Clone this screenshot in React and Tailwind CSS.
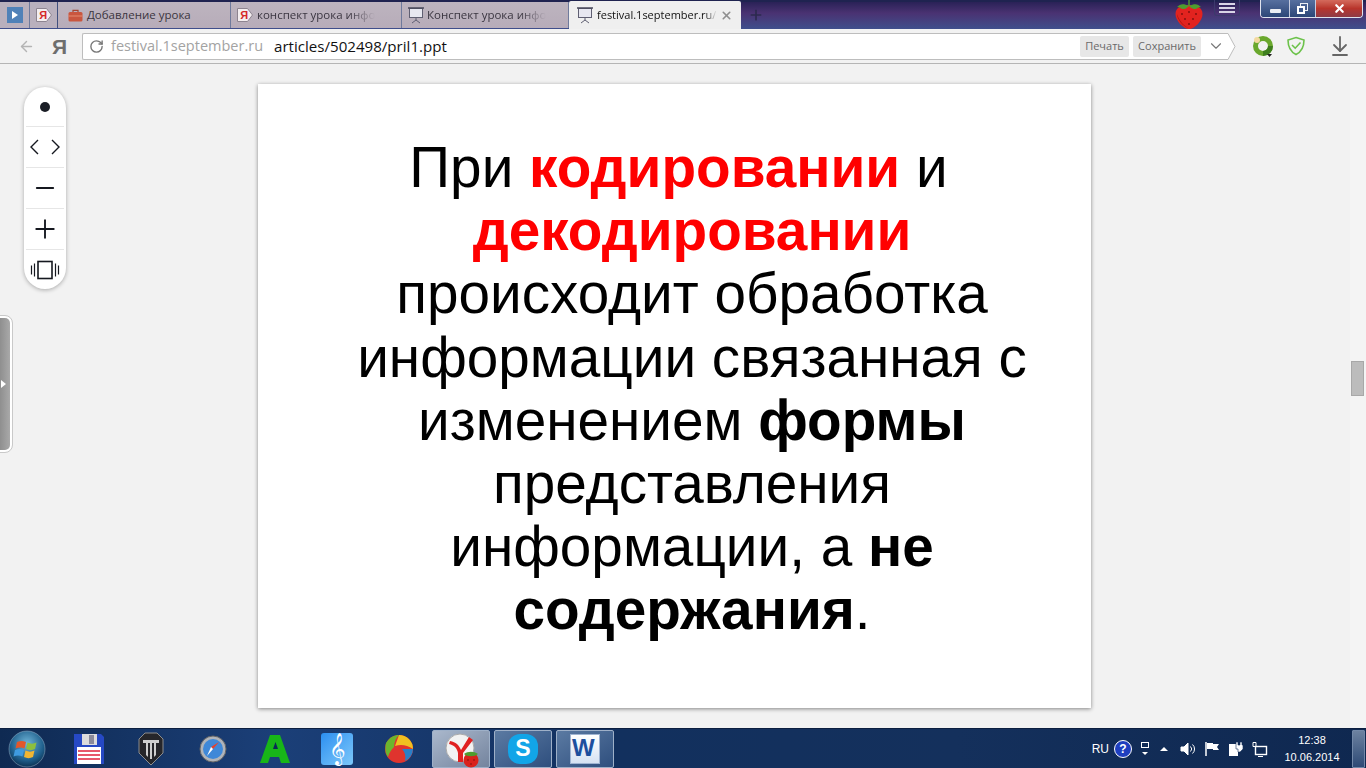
import { ArrowDownToLine, ArrowLeft, ChevronDown, Minus, Plus, RotateCw, X } from "lucide-react";

const UI_FONT = "font-['Open_Sans','Noto_Sans',sans-serif]";

const YaBadge = () => (
  <svg width="18" height="16" viewBox="0 0 18 16" className="shrink-0">
    <path d="M1.5 1.5h10l5 6.5-5 6.5h-10z" fill="#f4eef0" stroke="#8d8490" />
    <text x="4.2" y="12.2" fontSize="11" fontWeight="700" fill="#d42a2a" fontFamily="Liberation Sans, sans-serif">Я</text>
  </svg>
);

const BoardIcon = () => (
  <svg width="18" height="18" viewBox="0 0 18 18" className="shrink-0" fill="none">
    <rect x="2.5" y="2.5" width="13" height="9" fill="#e7e7f0" stroke="#5f5f72" />
    <path d="M1 2h16" stroke="#4a4a5c" strokeWidth="1.5" />
    <path d="M9 12v2M9 14l-4 3M9 14l4 3" stroke="#5f5f72" />
  </svg>
);

const CaseIcon = () => (
  <svg width="15" height="13" viewBox="0 0 15 13" className="shrink-0">
    <rect x="0.5" y="3" width="14" height="9.5" rx="1.5" fill="#c9563f" />
    <path d="M5 3V1.3h5V3" fill="none" stroke="#a84430" strokeWidth="1.2" />
    <rect x="0.5" y="6.5" width="14" height="1" fill="#e58b72" />
  </svg>
);

const Tab = ({ icon, label, width, gap = "gap-[5px]", padding = "pl-[8px]", fade }) => (
  <div className={`${width} ${padding} ${gap} h-[26px] flex items-center bg-gradient-to-b from-[#bdb4bf] to-[#b7acb9] border-r border-[#6f7a9c] overflow-hidden`}>
    {icon}
    <span className={`text-[11.500px] text-[#3a3540] whitespace-nowrap ${fade ? "[mask-image:linear-gradient(to_right,black_78%,transparent)]" : ""}`}>
      {label}
    </span>
  </div>
);

const Strawberry = () => (
  <svg width="30" height="30" viewBox="0 0 30 30">
    <path d="M15 5C8 5 1.5 7 1.5 14c0 7 8 15 13.5 15s13.5-8 13.5-15C28.500 7 22 5 15 5z" fill="#e2231f" />
    <path d="M3 14c0 5 6 13 12 14C9 26 5 20 3 14z" fill="#a81410" />
    <path d="M15 6C9 3 6 4 3 7c3 0 4 2 6 2s3 0 6-3zm0 0c6-3 9-2 12 1-3 0-4 2-6 2s-3 0-6-3z" fill="#4f9d2f" />
    <path d="M15 0v6" stroke="#4f9d2f" strokeWidth="1.5" />
    <g fill="#7a100c">
      <circle cx="8" cy="14" r=".9" /><circle cx="15" cy="12" r=".9" /><circle cx="22" cy="14" r=".9" />
      <circle cx="11" cy="19" r=".9" /><circle cx="19" cy="19" r=".9" /><circle cx="15" cy="24" r=".9" />
    </g>
  </svg>
);

const TabStrip = () => (
  <div className="h-[29px] shrink-0 flex items-end relative bg-[linear-gradient(to_bottom,#241f52_0%,#4a3272_45%,#3f4f8c_100%)]">
    <div className="absolute top-0 left-0 right-0 h-[2px] bg-[#1f2350]" />
    <div className="relative flex items-end pb-px w-full">
      <div className="w-[30px] h-[26px] flex items-center justify-center bg-[#b9b0bd] border-r border-[#6f7a9c]">
        <div className="w-4 h-4 bg-[#4f81b8] flex items-center justify-center">
          <div className="border-l-[6px] border-l-white border-y-[4px] border-y-transparent" />
        </div>
      </div>
      <div className="w-[28px] h-[26px] flex items-center justify-center bg-[#b9b0bd] border-r border-[#41507e]">
        <YaBadge />
      </div>
      <Tab width="w-[173px]" icon={<CaseIcon />} label="Добавление урока" gap="gap-[4px]" padding="pl-[10px]" />
      <Tab width="w-[171px]" icon={<YaBadge />} label="конспект урока инфо" padding="pl-[5px]" gap="gap-[3px]" fade />
      <Tab width="w-[167px]" icon={<BoardIcon />} label="Конспект урока инфо" padding="pl-[5px]" gap="gap-[2px]" fade />
      <div className="w-[172px] h-[28px] -mb-px pl-[7px] pr-2 flex items-center gap-[3px] bg-[#efefef] rounded-t-[2px]">
        <BoardIcon />
        <span className="text-[11px] text-[#111] whitespace-nowrap flex-1 [mask-image:linear-gradient(to_right,black_90%,transparent)]">
          festival.1september.ru/
        </span>
        <X size={13} strokeWidth={3} className="text-[#8f8f8f] shrink-0" />
      </div>
      <div className="ml-[7px] h-[26px] flex items-center">
        <Plus size={16} strokeWidth={2.5} className="text-[#2c2a4f]" />
      </div>
      <div className="ml-auto h-[28px] flex items-start">
        <Strawberry />
        <div className="ml-[10px] w-[26px] h-[16px] flex flex-col items-center justify-center gap-[2px] border border-t-0 border-[#3c3a6c] rounded-b-[3px]">
          <div className="w-4 h-[2px] bg-[#d7d4e6]" />
          <div className="w-4 h-[2px] bg-[#d7d4e6]" />
          <div className="w-4 h-[2px] bg-[#d7d4e6]" />
        </div>
        <div className="ml-[20px] mr-[3px] w-[103px] h-[18px] flex border border-t-0 border-[#dfe3ee] rounded-b-[4px] overflow-hidden">
          <div className="w-[29px] flex items-center justify-center bg-gradient-to-b from-[#57709f] to-[#2c4677] border-r border-[#c6cde0]">
            <div className="w-[11px] h-[4px] mt-1 bg-white/90 rounded-[1px]" />
          </div>
          <div className="w-[26px] flex items-center justify-center bg-gradient-to-b from-[#57709f] to-[#2c4677] border-r border-[#c6cde0]">
            <div className="relative w-[11px] h-[11px]">
              <div className="absolute top-0 right-0 w-[8px] h-[8px] border border-white/90" />
              <div className="absolute bottom-0 left-0 w-[8px] h-[8px] border-2 border-white bg-[#3f5a8c]" />
            </div>
          </div>
          <div className="flex-1 flex items-center justify-center bg-gradient-to-b from-[#d46a5c] via-[#b8342b] to-[#8e3a46]">
            <X size={13} strokeWidth={4} className="text-white" />
          </div>
        </div>
      </div>
    </div>
  </div>
);

const Toolbar = () => (
  <div className={`h-[35px] shrink-0 flex items-center bg-[#f2f2f2] border-b border-[#b5b5b5] ${UI_FONT}`}>
    <ArrowLeft size={17} strokeWidth={2} className="ml-[18px] text-[#b4b4b4]" />
    <span className="ml-[17px] w-[29px] text-[21px] leading-none font-bold text-[#6e6e6e] font-['Liberation_Sans',sans-serif]">Я</span>
    <div className="relative h-[27px] w-[1146px] ml-[1px] flex items-center bg-white border border-r-0 border-[#bdbdbd] rounded-l-[2px]">
      <RotateCw size={15} strokeWidth={2.2} className="ml-[6px] text-[#777]" />
      <span className="ml-[7px] text-[14.500px] text-[#a3a3a3]">festival.1september.ru</span>
      <span className="ml-[11px] text-[15.100px] text-[#111]">articles/502498/pril1.ppt</span>
      <div className="ml-auto flex items-center h-full">
        <span className="h-[21px] w-[49px] flex items-center justify-center bg-[#e7e7e7] rounded-[2px] text-[11px] text-[#6a6a6a]">Печать</span>
        <span className="ml-[4px] h-[21px] w-[68px] flex items-center justify-center bg-[#e7e7e7] rounded-[2px] text-[11px] text-[#6a6a6a]">Сохранить</span>
        <ChevronDown size={18} strokeWidth={1.5} className="ml-[6px] mr-[3px] text-[#777]" />
      </div>
      <svg width="9" height="27" viewBox="0 0 9 27" className="absolute -right-[8px] -top-px">
        <path d="M0 .5h1L8 13.500 1 26.500H0" fill="#fff" stroke="#bdbdbd" />
      </svg>
    </div>
    <svg width="22" height="22" viewBox="0 0 22 22" className="ml-[24px]">
      <circle cx="11" cy="11" r="7.500" fill="none" stroke="#6aa82d" strokeWidth="5" />
      <path d="M11 18.500a7.500 7.500 0 0 0 7.500-7.500" fill="none" stroke="#3f7f1f" strokeWidth="5" />
      <circle cx="5" cy="5" r="3" fill="#f3d9a0" />
      <path d="M15 19h5l-2.500 3z" fill="#222" />
    </svg>
    <svg width="20" height="20" viewBox="0 0 20 20" fill="none" className="ml-[12px]">
      <path d="M10 1.500l8 2.500c0 7-2 11.500-8 14.500C4 15.500 2 11 2 4z" stroke="#6cc24a" strokeWidth="1.600" />
      <path d="M6 9l3.200 3.200L14.500 6.500" stroke="#6cc24a" strokeWidth="1.600" />
    </svg>
    <ArrowDownToLine size={24} strokeWidth={1.8} className="ml-[22px] text-[#666]" />
  </div>
);

const ToolDivider = () => <div className="mx-[2px] h-px bg-[#e6e6e6]" />;

const ZoomPanel = () => (
  <div className="absolute left-[24px] top-[23px] w-[42px] h-[202px] flex flex-col bg-white rounded-[21px] shadow-[0_1px_4px_rgba(0,0,0,0.3)] text-[#15181f]">
    <div className="h-[39px] flex items-center justify-center">
      <div className="w-[10px] h-[10px] rounded-full bg-[#1a1d25]" />
    </div>
    <ToolDivider />
    <div className="h-[40px] flex items-center justify-center">
      <svg width="30" height="16" viewBox="0 0 30 16" fill="none" stroke="#15181f" strokeWidth="1.400">
        <path d="M8 1L1 8l7 7M22 1l7 7-7 7" />
      </svg>
    </div>
    <ToolDivider />
    <div className="h-[40px] flex items-center justify-center"><Minus size={28} strokeWidth={1.6} /></div>
    <ToolDivider />
    <div className="h-[40px] flex items-center justify-center"><Plus size={30} strokeWidth={1.5} /></div>
    <ToolDivider />
    <div className="flex-1 flex items-center justify-center">
      <svg width="30" height="20" viewBox="0 0 30 20" fill="none" stroke="#15181f">
        <rect x="8" y="1.500" width="14" height="17" strokeWidth="1.600" />
        <path d="M4.500 3.500v13M1.500 5.500v9M25.500 3.500v13M28.500 5.500v9" strokeWidth="1.200" />
      </svg>
    </div>
  </div>
);

const Slide = () => (
  <div className="w-[833px] h-[624px] flex flex-col items-center pt-[52px] pl-[35px] bg-white shadow-[0_1px_4px_rgba(0,0,0,0.45)] font-['Liberation_Sans',sans-serif] text-[56.700px] leading-[63.2px] text-black text-center">
    <p className="whitespace-nowrap pr-[27px]">При <b className="text-[#ff0000]">кодировании</b> и</p>
    <p className="whitespace-nowrap"><b className="text-[#ff0000]">декодировании</b></p>
    <p className="whitespace-nowrap">происходит обработка</p>
    <p className="whitespace-nowrap">информации связанная с</p>
    <p className="whitespace-nowrap">изменением <b>формы</b></p>
    <p className="whitespace-nowrap">представления</p>
    <p className="whitespace-nowrap">информации, а <b>не</b></p>
    <p className="whitespace-nowrap"><b>содержания</b>.</p>
  </div>
);

const Viewer = () => (
  <div className="relative flex-1 flex justify-center pt-[20px] pr-[17px] bg-[#f2f2f2] overflow-hidden">
    <ZoomPanel />
    {/* side panel handle */}
    <div className="absolute left-0 top-[252px] w-[12px] h-[136px] flex items-center justify-end pr-[4px] bg-gradient-to-r from-[#8f8f8f] to-[#a9a9a9] border-2 border-l-0 border-white rounded-r-[7px] outline outline-1 outline-[#c9c9c9]">
      <div className="border-l-[5px] border-l-white border-y-[4px] border-y-transparent" />
    </div>
    <Slide />
    {/* scrollbar */}
    <div className="absolute right-0 top-0 bottom-0 w-[16px] bg-[#f4f4f4]">
      <div className="absolute left-[1px] top-[297px] w-[13px] h-[35px] bg-[#bcbcbc] border border-[#a8a8a8]" />
    </div>
  </div>
);

const Orb = () => (
  <svg width="38" height="38" viewBox="0 0 38 38">
    <defs>
      <radialGradient id="orb" cx="50%" cy="35%" r="65%">
        <stop offset="0%" stopColor="#6fb5d8" />
        <stop offset="70%" stopColor="#1f5f8c" />
        <stop offset="100%" stopColor="#0d3354" />
      </radialGradient>
    </defs>
    <circle cx="19" cy="19" r="18" fill="url(#orb)" stroke="#9ab4c9" strokeOpacity=".5" />
    <path d="M9 12c3-1.500 6-1.500 9 0l-1.500 6.500c-3-1.500-6-1.500-9 0z" fill="#e2572b" />
    <path d="M19.500 12.500c3 1.500 6 1.500 9 0L27 19c-3 1.500-6 1.500-9 0z" fill="#8cbf3f" />
    <path d="M7 20c3-1.500 6-1.500 9 0l-1.500 6.500c-3-1.500-6-1.500-9 0z" fill="#3f9be0" />
    <path d="M17.500 20.500c3 1.500 6 1.500 9 0L25 27c-3 1.500-6 1.500-9 0z" fill="#f2b632" />
  </svg>
);

const FloppyIcon = () => (
  <svg width="32" height="32" viewBox="0 0 32 32">
    <path d="M1 1h27l3 3v27H1z" fill="#2649c4" />
    <rect x="9" y="1" width="15" height="11" fill="#dcdcdc" />
    <rect x="16" y="2" width="5" height="9" fill="#8a8a9a" />
    <rect x="4" y="14" width="24" height="17" fill="#fff" />
    <path d="M5 18h22M5 22h22M5 26h22" stroke="#e0203a" strokeWidth="1.300" />
  </svg>
);

const TanksIcon = () => (
  <svg width="26" height="34" viewBox="0 0 26 34">
    <path d="M7 1h12l6 6v14L13 33 1 21V7z" fill="#26262a" stroke="#8d8d8d" />
    <path d="M5 8h16v3h-3v12l-2 2V11h-2v16h-2V11H10v14l-2-2V11H5z" fill="#cfcfcf" />
  </svg>
);

const SafariIcon = () => (
  <svg width="28" height="28" viewBox="0 0 28 28">
    <circle cx="14" cy="14" r="13" fill="#b0b4ba" stroke="#666" />
    <circle cx="14" cy="14" r="10" fill="#3f88d8" />
    <path d="M20 7l-8 5 2 2z" fill="#e8402a" />
    <path d="M8 21l4-9 2 2z" fill="#fff" />
  </svg>
);

const GreenAIcon = () => (
  <svg width="32" height="32" viewBox="0 0 32 32">
    <path d="M11 2h10l10 28h-9l-2-6h-9l-2 6H1z" fill="#18b618" />
    <path d="M14 16h5l-2.500-7z" fill="#0a2a55" />
  </svg>
);

const MusicIcon = () => (
  <div className="w-[32px] h-[32px] flex items-center justify-center rounded-[3px] bg-gradient-to-br from-[#2a8ff0] to-[#7cc8fa] text-[28px] leading-none text-white font-['DejaVu_Sans',sans-serif]">
    𝄞
  </div>
);

const BallIcon = () => (
  <svg width="30" height="30" viewBox="0 0 30 30">
    <circle cx="15" cy="15" r="14" fill="#e0342e" />
    <path d="M15 1a14 14 0 0 1 14 14c-6-4-12-5-18-3z" fill="#f0c020" />
    <path d="M2 9c4-6 8-8 13-8-3 3-5 7-5 12-3 3-5 6-6 10-3-4-3-9-2-14z" fill="#6cb52d" />
    <path d="M29 15a14 14 0 0 1-8 12c1-5 0-9-3-12z" fill="#2a7fc9" />
  </svg>
);

const YandexIcon = () => (
  <div className="relative w-[32px] h-[32px]">
    <svg width="32" height="32" viewBox="0 0 32 32">
      <circle cx="15" cy="15" r="14" fill="#f2f2f2" stroke="#aaa" />
      <path d="M5 8c6 1 9 4 11 9l8-13 4 3-10 13v9h-5v-9C12 15 9 12 4 11z" fill="#e02020" />
    </svg>
    <svg width="20" height="20" viewBox="0 0 20 20" className="absolute -right-[4px] -bottom-[3px]">
      <circle cx="10" cy="12" r="7.500" fill="#d9221c" />
      <path d="M3 6c4-3 10-3 14 0-3 3-11 3-14 0z" fill="#4f9d2f" />
      <circle cx="7" cy="12" r=".8" fill="#7a100c" />
      <circle cx="13" cy="12" r=".8" fill="#7a100c" />
      <circle cx="10" cy="16" r=".8" fill="#7a100c" />
    </svg>
  </div>
);

const SkypeIcon = () => (
  <div className="w-[30px] h-[30px] flex items-center justify-center rounded-[12px] bg-[#12a5e8] text-white text-[23px] font-bold font-['Liberation_Sans',sans-serif] leading-none">
    S
  </div>
);

const WordIcon = () => (
  <div className="relative w-[30px] h-[30px] bg-gradient-to-b from-white to-[#d6e2f2] border border-[#9fb4d2]">
    <span className="absolute left-[1px] top-[1px] text-[24px] leading-none font-bold text-[#1d4f9e] font-['Liberation_Sans',sans-serif]">W</span>
  </div>
);

const PINNED = [
  { id: "save", icon: <FloppyIcon /> },
  { id: "tanks", icon: <TanksIcon /> },
  { id: "safari", icon: <SafariIcon /> },
  { id: "a", icon: <GreenAIcon /> },
  { id: "music", icon: <MusicIcon /> },
  { id: "ball", icon: <BallIcon /> },
];

const RUNNING = [
  { id: "yandex", icon: <YandexIcon />, style: "from-[#aab8cc] to-[#74849e]" },
  { id: "skype", icon: <SkypeIcon />, style: "from-[#5b7aa2] to-[#2f4f7e]" },
  { id: "word", icon: <WordIcon />, style: "from-[#5b7aa2] to-[#2f4f7e]" },
];

const Taskbar = () => (
  <div className="h-[40px] shrink-0 flex items-center border-t border-[#0c1f40] bg-[linear-gradient(to_right,#0f2a52_0%,#1b3f78_20%,#12305e_45%,#14305c_70%,#0f2850_100%)] font-['Liberation_Sans',sans-serif]">
    <div className="w-[58px] pl-[8px] flex items-center"><Orb /></div>
    {PINNED.map((item) => (
      <div key={item.id} className="w-[62px] flex items-center justify-center">{item.icon}</div>
    ))}
    <div className="ml-[2px] flex gap-[4px]">
      {RUNNING.map((item) => (
        <div
          key={item.id}
          className={`w-[58px] h-[38px] flex items-center justify-center bg-gradient-to-br ${item.style} border border-[#9eb0c8] rounded-[2px]`}
        >
          {item.icon}
        </div>
      ))}
    </div>
    <div className="ml-auto flex items-center text-white">
      <span className="text-[12px]">RU</span>
      <div className="ml-[5px] w-[18px] h-[18px] rounded-full bg-[#1f3fbf] border border-white text-[12px] font-bold leading-none flex items-center justify-center">?</div>
      <div className="ml-[9px] flex flex-col items-center gap-[4px]">
        <div className="w-[8px] h-[6px] border border-white" />
        <div className="border-t-[3px] border-t-white border-x-[3px] border-x-transparent" />
      </div>
      <div className="ml-[11px] border-b-[4px] border-b-white border-x-[4px] border-x-transparent" />
      <svg width="16" height="16" viewBox="0 0 16 16" className="ml-[12px]" fill="none" stroke="#fff">
        <path d="M1 6h3l4-4v12l-4-4H1z" fill="#fff" />
        <path d="M10.500 5.500a3.500 3.500 0 0 1 0 5M12.500 3.500a6 6 0 0 1 0 9" />
      </svg>
      <svg width="16" height="16" viewBox="0 0 16 16" className="ml-[8px]">
        <path d="M2 1v14" stroke="#fff" strokeWidth="1.500" />
        <path d="M3 2h6v1h6l-2 3 2 3H9V8H3z" fill="#fff" />
      </svg>
      <svg width="16" height="16" viewBox="0 0 16 16" className="ml-[8px]">
        <rect x="1" y="3" width="9" height="12" fill="#fff" />
        <path d="M8 1h2v3h2V1h2v3h1v4l-3 3h-2V8H8z" fill="#fff" stroke="#14305c" strokeWidth=".6" />
      </svg>
      <svg width="16" height="16" viewBox="0 0 16 16" className="ml-[8px]" fill="none" stroke="#fff">
        <rect x="3.500" y="5.500" width="11" height="8" strokeWidth="1.400" />
        <path d="M1 1.500h3v4H1zM6 15.500h5" />
      </svg>
      <div className="ml-[4px] w-[80px] flex flex-col items-center text-[11px] leading-[17px] text-white">
        <span>12:38</span>
        <span>10.06.2014</span>
      </div>
      <div className="mr-px w-[13px] h-[38px] border border-[#7288a8] bg-gradient-to-b from-[#6d82a0] to-[#2e4a75] rounded-[1px]" />
    </div>
  </div>
);

export default function App() {
  return (
    <div className="h-[768px] w-[1366px] flex flex-col overflow-hidden bg-[#f2f2f2]">
      <div className={UI_FONT}>
        <TabStrip />
      </div>
      <Toolbar />
      <Viewer />
      <Taskbar />
    </div>
  );
}
